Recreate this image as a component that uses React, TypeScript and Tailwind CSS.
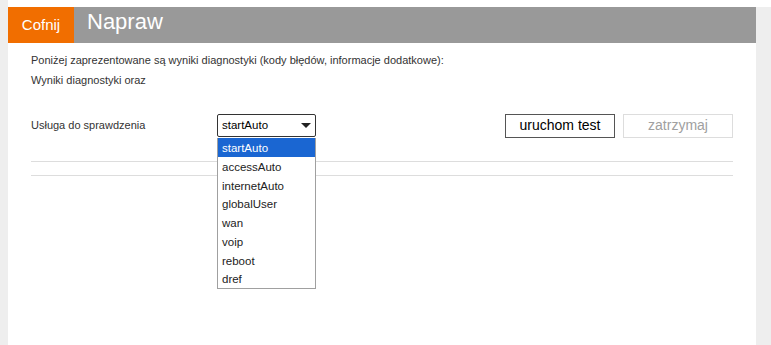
import React from "react";

const items = ["startAuto", "accessAuto", "internetAuto", "globalUser", "wan", "voip", "reboot", "dref"];

export default function App() {
  return (
    <div
      className="w-[771px] h-[345px] bg-[#eeeeee] flex overflow-hidden"
      style={{ fontFamily: '"Liberation Sans", Arial, sans-serif' }}
    >
      <div className="w-[8px] shrink-0" />
      <div className="w-[748px] shrink-0 flex flex-col">
        <div className="h-[7px] bg-white" />
        <div className="bg-white flex-1 flex flex-col">
          <div className="h-[36px] flex bg-[#999999]">
            <div className="w-[66px] bg-[#f16e00] text-white text-[15px] flex items-center justify-center pt-[1px]">
              Cofnij
            </div>
            <div className="pl-[13px] text-white text-[22px] leading-[26px] pt-[2px]">Napraw</div>
          </div>
          <div className="px-[23px] pt-[7px] text-[#333333] text-[11px] relative">
            <div className="leading-[20px]">Poniżej zaprezentowane są wyniki diagnostyki (kody błędów, informacje dodatkowe):</div>
            <div className="leading-[20px]">Wyniki diagnostyki oraz</div>
            <div className="mt-[24px] flex items-center h-[23px]">
              <div className="w-[186px] shrink-0 text-[11px]">Usługa do sprawdzenia</div>
              <div className="relative shrink-0">
                <div className="w-[99px] h-[23px] border border-[#333333] rounded-[2px] flex items-center justify-between pl-[4px] pr-[4px] text-[11.5px] text-black">
                  <span>startAuto</span>
                  <svg width="10" height="5" viewBox="0 0 10 5">
                    <path d="M0 0 L10 0 L5 5 Z" fill="#222" />
                  </svg>
                </div>
                <div className="absolute left-0 top-[24px] w-[99px] bg-white border border-[#a0a0a0] border-t-0 z-10 text-[11.5px] text-[#222]">
                  {items.map((it, i) => (
                    <div
                      key={it}
                      className={
                        i === 0
                          ? "h-[18.75px] leading-[18.75px] pt-[1px] pl-[4px] bg-[#1a66d2] text-white"
                          : "h-[18.75px] leading-[18.75px] pt-[1px] pl-[4px]"
                      }
                    >
                      {it}
                    </div>
                  ))}
                </div>
              </div>
              <div className="ml-[189px] w-[111px] h-[24px] border border-[#555555] flex items-center justify-center text-[14px] text-black">
                uruchom test
              </div>
              <div className="ml-[8px] w-[111px] h-[24px] border border-[#dddddd] flex items-center justify-center text-[14px] text-[#a0a0a0]">
                zatrzymaj
              </div>
            </div>
            <div className="mt-[24px] h-px bg-[#dddddd]" />
            <div className="mt-[13px] h-px bg-[#dddddd]" />
          </div>
        </div>
      </div>
      <div className="flex-1 flex flex-col">
        <div className="h-[7px] bg-white" />
      </div>
    </div>
  );
}
